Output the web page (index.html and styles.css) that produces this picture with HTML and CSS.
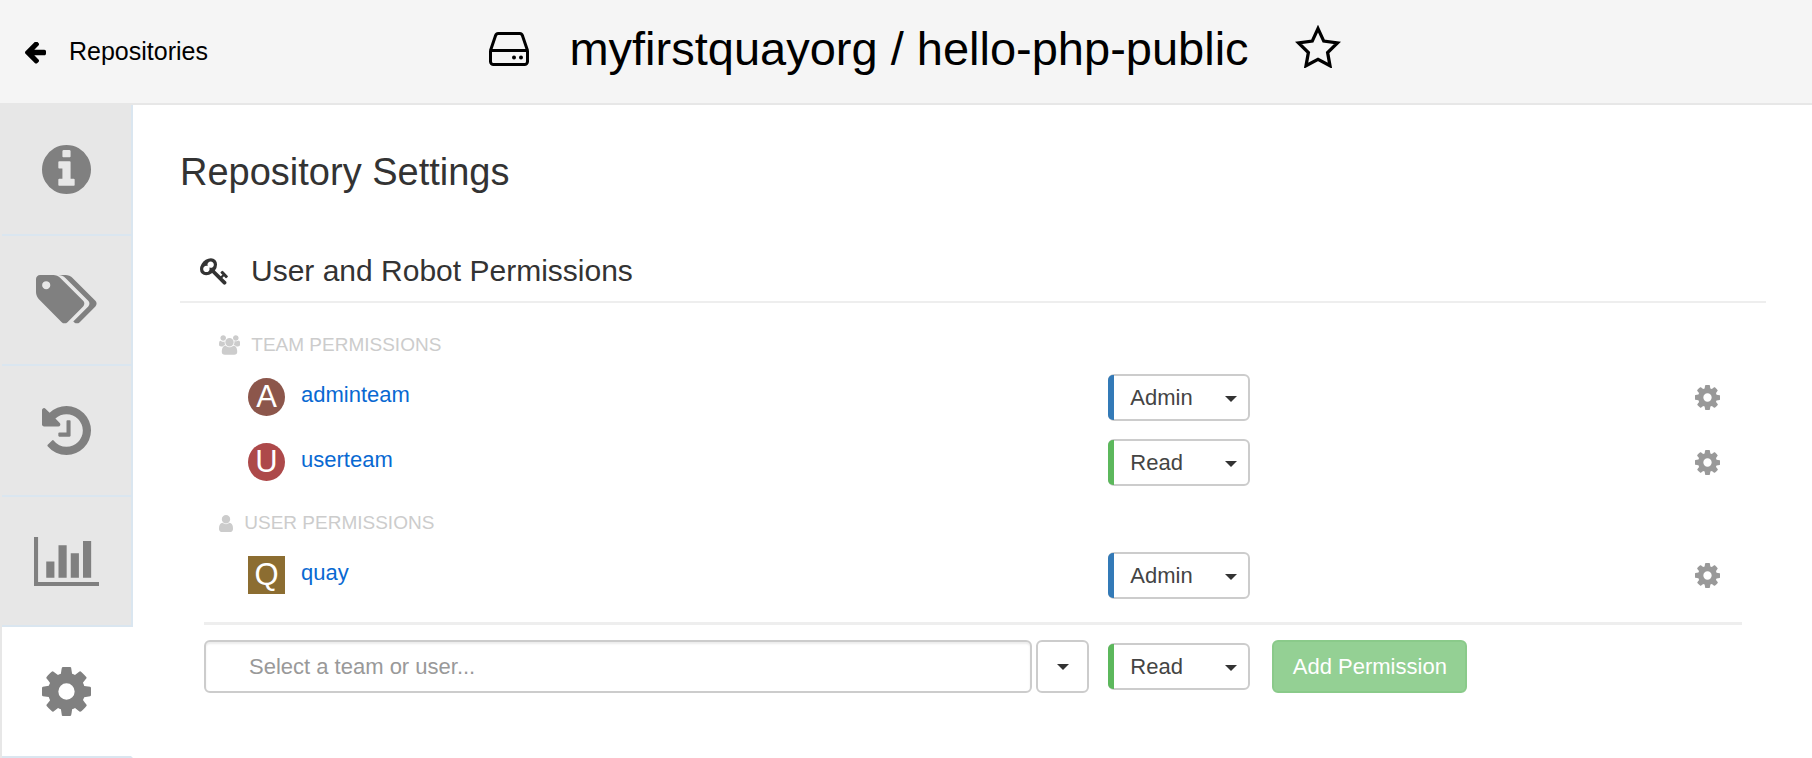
FILE: index.html
```html
<!DOCTYPE html>
<html lang="en">
<head>
    <meta charset="UTF-8">
    <meta name="viewport" content="width=device-width, initial-scale=1.0">
    <title>myfirstquayorg / hello-php-public</title>
    <link rel="stylesheet" href="styles.css">
</head>
<body>
    <!-- Shared icons -->
    <svg class="icon-defs" aria-hidden="true">
        <symbol id="icon-cog" viewBox="128 128 1536 1536">
            <path d="M1152 896q0-106-75-181t-181-75-181 75-75 181 75 181 181 75 181-75 75-181zm512-109v222q0 12-8 23t-20 13l-185 28q-19 54-39 91 35 50 107 138 10 12 10 25t-9 23q-27 37-99 108t-94 71q-12 0-26-9l-138-108q-44 23-91 38-16 136-29 186-7 28-36 28h-222q-14 0-24.5-8.5t-11.5-21.5l-28-184q-49-16-90-37l-141 107q-10 9-25 9-14 0-25-11-126-114-165-168-7-10-7-23 0-12 8-23 15-21 51-66.5t54-70.5q-27-50-41-99l-183-27q-13-2-21-12.5t-8-23.5v-222q0-12 8-23t19-13l186-28q14-46 39-92-40-57-107-138-10-12-10-24 0-10 9-23 26-36 98.5-107.5t94.5-71.5q13 0 26 10l138 107q44-23 91-38 16-136 29-186 7-28 36-28h222q14 0 24.5 8.5t11.5 21.5l28 184q49 16 90 37l142-107q9-9 24-9 13 0 25 10 129 119 165 170 7 8 7 22 0 12-8 23-15 21-51 66.5t-54 70.5q26 50 41 98l183 28q13 2 21 12.5t8 23.5z"/>
        </symbol>
    </svg>

    <header class="repo-header">
        <a class="back-link" href="#">
            <svg class="back-icon" viewBox="192 256 1472 1480"><path d="M1664 896v128q0 53-32.5 90.5t-84.5 37.5h-704l293 294q38 36 38 90t-38 90l-75 76q-37 37-90 37-52 0-91-37l-651-652q-37-37-37-90 0-52 37-91l651-650q38-38 91-38 52 0 90 38l75 74q38 38 38 91t-38 91l-293 293h704q52 0 84.5 37.5t32.5 90.5z"/></svg>
            Repositories
        </a>
        <div class="repo-title">
            <svg class="hdd-icon" viewBox="0 0 40 34">
                <path d="M1.500 18.500v11a3 3 0 0 0 3 3h31a3 3 0 0 0 3-3v-11zM1.500 18.500L6.500 3.800a3 3 0 0 1 3-2.300h21a3 3 0 0 1 3 2.300l5 14.700" fill="none" stroke="#000" stroke-width="3" stroke-linejoin="round"/>
                <circle cx="25" cy="25.500" r="2"/>
                <circle cx="32" cy="25.500" r="2"/>
            </svg>
            <h1>myfirstquayorg / hello-php-public</h1>
            <button class="star-btn" type="button" aria-label="Star repository">
                <svg viewBox="0 0 44 42"><path d="M22 3.500l5.600 12.200 13.400 1.800-9.600 9.500 2.300 12.800L22 33.500 10.300 39.800l2.300-12.800L3 17.500l13.400-1.800z" fill="none" stroke="#000" stroke-width="3.200"/></svg>
            </button>
        </div>
    </header>

    <div class="repo-body">
        <nav class="side-tabs">
            <a class="tab" href="#info" aria-label="Information">
                <svg class="tab-icon" viewBox="128 128 1536 1536"><path d="M1152 1376v-160q0-14-9-23t-23-9h-96v-512q0-14-9-23t-23-9h-320q-14 0-23 9t-9 23v160q0 14 9 23t23 9h96v320h-96q-14 0-23 9t-9 23v160q0 14 9 23t23 9h448q14 0 23-9t9-23zm-128-896v-160q0-14-9-23t-23-9h-192q-14 0-23 9t-9 23v160q0 14 9 23t23 9h192q14 0 23-9t9-23zm640 416q0 209-103 385.500t-279.500 279.500-385.500 103-385.500-103-279.500-279.500-103-385.500 103-385.500 279.500-279.500 385.500-103 385.500 103 279.500 279.500 103 385.500z"/></svg>
            </a>
            <a class="tab" href="#tags" aria-label="Tags">
                <svg class="tab-icon" viewBox="0 128 1899 1536"><path d="M448 448q0-53-37.500-90.500t-90.500-37.500-90.500 37.500-37.500 90.500 37.500 90.500 90.500 37.500 90.500-37.500 37.500-90.500zm1067 576q0 53-37 90l-491 492q-39 37-91 37-53 0-90-37l-715-716q-38-37-64.500-101t-26.500-117v-416q0-52 38-90t90-38h416q53 0 117 26.500t102 64.500l715 714q37 39 37 91zm384 0q0 53-37 90l-491 492q-39 37-91 37-36 0-59-14t-53-45l470-470q37-37 37-90 0-52-37-91l-715-714q-38-38-102-64.500t-117-26.500h224q53 0 117 26.500t102 64.500l715 714q37 39 37 91z"/></svg>
            </a>
            <a class="tab" href="#history" aria-label="Tag history">
                <svg class="tab-icon" viewBox="128 128 1536 1536"><path d="M1664 896q0 156-61 298t-164 245-245 164-298 61q-172 0-327-72.500t-264-204.500q-7-10-6.500-22.500t8.500-20.500l137-138q10-9 25-9 16 2 23 12 73 95 179 147t225 52q104 0 198.500-40.500t163.500-109.500 109.500-163.500 40.500-198.500-40.500-198.500-109.500-163.500-163.500-109.500-198.500-40.500q-98 0-188 35.500t-160 101.500l137 138q31 30 14 69-17 40-59 40h-448q-26 0-45-19t-19-45v-448q0-42 40-59 39-17 69 14l130 129q107-101 244.500-156.500t284.500-55.500q156 0 298 61t245 164 164 245 61 298zm-640-288v448q0 14-9 23t-23 9h-320q-14 0-23-9t-9-23v-64q0-14 9-23t23-9h224v-352q0-14 9-23t23-9h64q14 0 23 9t9 23z"/></svg>
            </a>
            <a class="tab" href="#logs" aria-label="Usage logs">
                <svg class="tab-icon" viewBox="0 128 2048 1536"><path d="M640 896v512h-256v-512h256zm384-512v1024h-256v-1024h256zm1024 1152v128h-2048v-1536h128v1408h1920zm-640-896v768h-256v-768h256zm384-384v1152h-256v-1152h256z"/></svg>
            </a>
            <a class="tab active" href="#settings" aria-label="Settings">
                <svg class="tab-icon" viewBox="0 0 1536 1536"><use href="#icon-cog"/></svg>
            </a>
        </nav>

        <main class="content">
            <h2>Repository Settings</h2>

            <h3 class="panel-heading">
                <svg class="key-icon" viewBox="0 128 1683 1592"><path d="M832 512q0-80-56-136t-136-56-136 56-56 136q0 42 19 83-41-19-83-19-80 0-136 56t-56 136 56 136 136 56 136-56 56-136q0-42-19-83 41 19 83 19 80 0 136-56t56-136zm851 704q0 17-49 66t-66 49q-9 0-28.500-16t-36.500-33-38.500-40-24.500-26l-96 96 220 220q28 28 28 68 0 42-39 81t-81 39q-40 0-68-28l-671-671q-176 131-365 131-163 0-265.500-102.500t-102.500-265.500q0-160 95-313t248-248 313-95q163 0 265.500 102.500t102.500 265.500q0 189-131 365l355 355 96-96q-3-3-26-24.500t-40-38.500-33-36.500-16-28.500q0-17 49-66t66-49q13 0 23 10 6 6 46 44.500t82 79.500 86.500 86 73 78 28.500 41z"/></svg>
                User and Robot Permissions
            </h3>

            <div class="permissions">
                <table class="permissions-table">
                    <tbody>
                        <tr>
                            <th class="group-title" colspan="3">
                                <svg class="users-icon" viewBox="0 0 1920 1792"><path d="M593 896q-162 5-265 128h-134q-82 0-138-40.500t-56-118.500q0-353 124-353 6 0 43.500 21t97.500 42.500 119 21.500q67 0 133-23-5 37-5 66 0 159 93 291zm1071 637q0 120-73 189.500t-194 69.500h-874q-121 0-194-69.500t-73-189.500q0-53 3.500-103.500t14-109 26.500-108.500 43-97.500 62-81 85.500-53.500 111.500-20q10 0 43 21.500t73 48 107 48 135 21.500 135-21.500 107-48 73-48 43-21.500q61 0 111.500 20t85.500 53.500 62 81 43 97.500 26.500 108.500 14 109 3.500 103.500zm-1024-1277q0 106-75 181t-181 75-181-75-75-181 75-181 181-75 181 75 75 181zm704 384q0 159-112.500 271.500t-271.500 112.500-271.500-112.500-112.500-271.500 112.500-271.500 271.500-112.500 271.500 112.500 112.500 271.500zm576 225q0 78-56 118.500t-138 40.500h-134q-103-123-265-128 93-132 93-291 0-29-5-66 66 23 133 23 59 0 119-21.500t97.500-42.500 43.500-21q124 0 124 353zm-128-609q0 106-75 181t-181 75-181-75-75-181 75-181 181-75 181 75 75 181z"/></svg>
                                <span>TEAM PERMISSIONS</span>
                            </th>
                        </tr>
                        <tr>
                            <td class="entity">
                                <span class="avatar team avatar-a">A</span><a href="#">adminteam</a>
                            </td>
                            <td class="role-cell">
                                <div class="role admin">
                                    <select aria-label="Role for adminteam">
                                        <option selected>Admin</option>
                                        <option>Write</option>
                                        <option>Read</option>
                                    </select>
                                </div>
                            </td>
                            <td class="options">
                                <button class="options-btn" type="button" aria-label="Options for adminteam"><svg><use href="#icon-cog"/></svg></button>
                            </td>
                        </tr>
                        <tr>
                            <td class="entity">
                                <span class="avatar team avatar-u">U</span><a href="#">userteam</a>
                            </td>
                            <td class="role-cell">
                                <div class="role read">
                                    <select aria-label="Role for userteam">
                                        <option>Admin</option>
                                        <option>Write</option>
                                        <option selected>Read</option>
                                    </select>
                                </div>
                            </td>
                            <td class="options">
                                <button class="options-btn" type="button" aria-label="Options for userteam"><svg><use href="#icon-cog"/></svg></button>
                            </td>
                        </tr>
                    </tbody>
                    <tbody>
                        <tr>
                            <th class="group-title" colspan="3">
                                <svg class="user-icon" viewBox="256 128 1280 1536"><path d="M1536 1399q0 109-62.500 187t-150.500 78h-854q-88 0-150.500-78t-62.500-187q0-85 8.500-160.500t31.500-152 58.500-131 94-89 134.500-34.500q131 128 313 128t313-128q76 0 134.500 34.500t94 89 58.500 131 31.500 152 8.500 160.500zm-256-887q0 159-112.500 271.500t-271.500 112.500-271.500-112.500-112.500-271.500 112.500-271.500 271.500-112.500 271.500 112.500 112.500 271.500z"/></svg>
                                <span>USER PERMISSIONS</span>
                            </th>
                        </tr>
                        <tr>
                            <td class="entity">
                                <span class="avatar avatar-q">Q</span><a href="#">quay</a>
                            </td>
                            <td class="role-cell">
                                <div class="role admin">
                                    <select aria-label="Role for quay">
                                        <option selected>Admin</option>
                                        <option>Write</option>
                                        <option>Read</option>
                                    </select>
                                </div>
                            </td>
                            <td class="options">
                                <button class="options-btn" type="button" aria-label="Options for quay"><svg><use href="#icon-cog"/></svg></button>
                            </td>
                        </tr>
                    </tbody>
                </table>

                <form class="add-form">
                    <div class="entity-search">
                        <input type="text" placeholder="Select a team or user..." aria-label="Team or user">
                        <button class="dropdown-btn" type="button" aria-label="Show teams and users"><span class="caret"></span></button>
                    </div>
                    <div class="add-actions">
                        <div class="role read">
                            <select aria-label="Role for new permission">
                                <option>Admin</option>
                                <option>Write</option>
                                <option selected>Read</option>
                            </select>
                        </div>
                        <button class="add-btn" type="submit" disabled>Add Permission</button>
                    </div>
                </form>
            </div>
        </main>
    </div>
</body>
</html>
```
FILE: styles.css
```css
* {
    box-sizing: border-box;
}
body {
    font-family: "Liberation Sans", Arial, sans-serif;
    font-size: 22px;
    margin: 0;
    color: #333;
    background-color: #fff;
    display: flex;
    flex-direction: column;
    min-height: 100vh;
}
button, input, select {
    font-family: inherit;
    font-size: 22px;
}
button {
    cursor: pointer;
}
a {
    color: #0969d2;
    text-decoration: none;
}
svg {
    display: block;
    fill: currentColor;
}
.icon-defs {
    display: none;
}

/* Header */
.repo-header {
    display: grid;
    grid-template-columns: 1fr auto 1fr;
    align-items: center;
    height: 105px;
    padding: 0 24px;
    color: #000;
    background-color: #f5f5f5;
    border-bottom: 2px solid #e7e7e7;
}
.back-link {
    display: flex;
    align-items: center;
    gap: 23px;
    padding-left: 1px;
    color: #000;
    font-size: 25px;
}
.back-icon {
    width: 21px;
    height: 22px;
    margin-top: 3px;
}
.repo-title {
    display: flex;
    align-items: center;
    padding: 0 0 6px 18px;
}
.repo-title h1 {
    margin: 0 46px 0 40px;
    font-size: 47px;
    font-weight: normal;
}
.hdd-icon {
    width: 40px;
    height: 34px;
}
.star-btn {
    padding: 0 0 5px;
    border: none;
    background: none;
    color: #000;
}
.star-btn svg {
    width: 46px;
    height: 43px;
}

/* Side tabs */
.repo-body {
    display: flex;
    flex: 1;
}
.side-tabs {
    display: flex;
    flex-direction: column;
    width: 133px;
    background-color: #e7e7e7;
}
.tab {
    display: flex;
    flex: 1;
    justify-content: center;
    align-items: center;
    max-height: 131px;
    border: 0 solid #dae6f0;
    border-width: 0 2px 2px 0;
    margin-left: 2px;
    color: #808080;
}
.tab.active {
    background-color: #fff;
    border-right-color: #fff;
}
.tab-icon {
    height: 49px;
}

/* Settings */
.content {
    flex: 1;
    padding: 42px 46px 40px 47px;
}
.content h2 {
    margin: 0;
    font-size: 38px;
    font-weight: normal;
    line-height: 50px;
}
.panel-heading {
    display: flex;
    align-items: center;
    gap: 23px;
    margin: 52px 0 0;
    padding: 0 0 8px 20px;
    border-bottom: 2px solid #eee;
    font-size: 30px;
    font-weight: normal;
    line-height: 44px;
}
.key-icon {
    width: 28px;
    height: 27px;
}
.permissions {
    padding: 14px 24px 0;
}
.permissions-table {
    width: 100%;
    border-collapse: collapse;
    border-bottom: 3px solid #eee;
}
.permissions-table tbody:last-child::after {
    content: "";
    display: block;
    height: 14px;
}
.permissions-table td {
    height: 65px;
    padding: 0;
}
.group-title {
    height: 48px;
    padding: 8px 0 0 15px;
    color: #ccc;
    font-size: 19px;
    font-weight: normal;
    text-align: left;
}
.group-title svg,
.group-title span {
    display: inline-block;
    vertical-align: middle;
}
.users-icon {
    width: 21px;
    height: 20px;
    margin-right: 6px;
}
.user-icon {
    width: 14px;
    height: 17px;
    margin-right: 6px;
}
.entity {
    width: 58.8%;
}
.permissions-table .entity {
    padding: 0 0 1px 44px;
}
.entity a {
    display: inline-block;
    padding-bottom: 4px;
    vertical-align: middle;
}
.avatar {
    display: inline-block;
    width: 37px;
    height: 38px;
    margin-right: 16px;
    color: #fff;
    font-size: 31px;
    line-height: 38px;
    text-align: center;
    vertical-align: middle;
}
.avatar.team {
    border-radius: 50%;
}
.avatar-a {
    background-color: #8c564b;
}
.avatar-u {
    background-color: #ad494a;
}
.avatar-q {
    background-color: #8c6d31;
}

/* Role drop-down, the bar on its left shows the role's colour */
.role {
    position: relative;
    width: 142px;
}
.role::before {
    content: "";
    position: absolute;
    top: 1px;
    bottom: 1px;
    left: 0;
    width: 6px;
    border-radius: 5px 0 0 5px;
}
.role.admin::before {
    background-color: #337ab7;
}
.role.read::before {
    background-color: #5cb85c;
}
.role::after {
    content: "";
    position: absolute;
    top: 22px;
    right: 13px;
    border-top: 6px solid #333;
    border-left: 6px solid transparent;
    border-right: 6px solid transparent;
    pointer-events: none;
}
.role select {
    display: block;
    width: 100%;
    height: 47px;
    padding: 0 34px 0 20px;
    border: 2px solid #ccc;
    border-radius: 6px;
    background-color: #fff;
    color: #444;
    appearance: none;
    cursor: pointer;
}
.options-btn {
    display: block;
    margin-left: auto;
    margin-right: 22px;
    padding: 0;
    border: none;
    background: none;
    color: #999;
}
.options-btn svg {
    width: 25px;
    height: 25px;
}

/* Add permission */
.add-form {
    display: flex;
    margin-top: 15px;
}
.entity-search {
    display: flex;
    gap: 4px;
    width: 58.8%;
    padding-right: 19px;
}
.entity-search input {
    flex: 1;
    min-width: 0;
    height: 53px;
    padding: 0 20px 0 43px;
    border: 2px solid #ccc;
    border-radius: 6px;
    box-shadow: inset 0 2px 2px rgba(0, 0, 0, 0.08);
}
.entity-search input::placeholder {
    color: #999;
}
.dropdown-btn {
    display: flex;
    justify-content: center;
    align-items: center;
    width: 53px;
    padding: 0;
    border: 2px solid #ccc;
    border-radius: 6px;
    background-color: #fff;
}
.caret {
    border-top: 6px solid #333;
    border-left: 6px solid transparent;
    border-right: 6px solid transparent;
}
.add-actions {
    display: flex;
    align-items: center;
    gap: 22px;
}
.add-btn {
    width: 195px;
    height: 53px;
    padding: 0;
    border: 2px solid #4cae4c;
    border-radius: 6px;
    background-color: #5cb85c;
    color: #fff;
    white-space: nowrap;
}
.add-btn:disabled {
    opacity: 0.65;
}
```
